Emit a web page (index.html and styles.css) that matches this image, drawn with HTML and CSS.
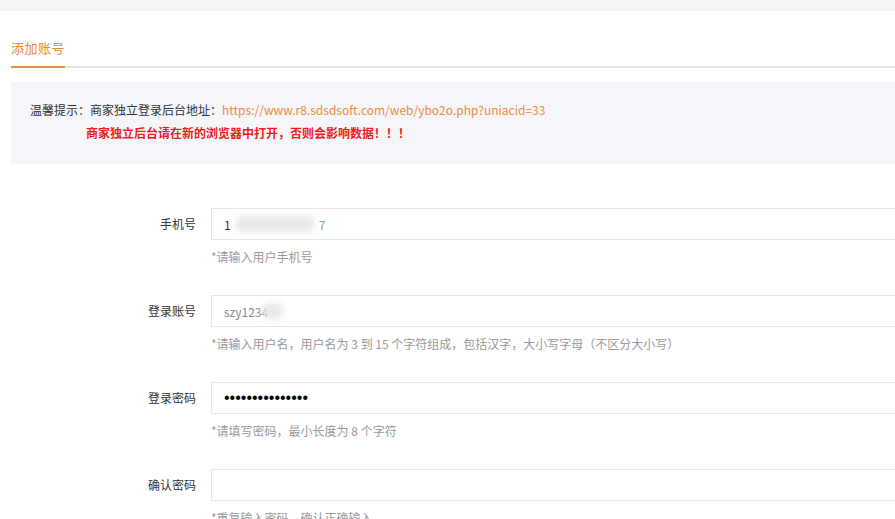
FILE: index.html
```html
<!DOCTYPE html>
<html lang="zh-CN">
<head>
  <meta charset="UTF-8" />
  <meta name="viewport" content="width=device-width, initial-scale=1.0"/>
  <title>添加账号</title>
  <link rel="stylesheet" href="styles.css">
</head>
<body>

<div class="topbar"></div>

<div class="main">
  <div class="tabs">
    <span class="tab active">添加账号</span>
  </div>

  <div class="alert">
    <div class="alert-line">温馨提示：商家独立登录后台地址：<span class="link">https://www.r8.sdsdsoft.com/web/ybo2o.php?uniacid=33</span></div>
    <div class="alert-warn">商家独立后台请在新的浏览器中打开，否则会影响数据！！！</div>
  </div>

  <form class="form">
    <div class="form-group">
      <label class="label">手机号</label>
      <div class="field">
        <div class="input"><span class="val">1</span><span class="blur wide"></span><span class="val tail">7</span></div>
        <div class="help">*请输入用户手机号</div>
      </div>
    </div>

    <div class="form-group">
      <label class="label">登录账号</label>
      <div class="field">
        <div class="input"><span class="val faded">szy1234</span><span class="blur short"></span></div>
        <div class="help">*请输入用户名，用户名为 3 到 15 个字符组成，包括汉字，大小写字母（不区分大小写）</div>
      </div>
    </div>

    <div class="form-group">
      <label class="label">登录密码</label>
      <div class="field">
        <div class="input"><span class="dots">•••••••••••••••</span></div>
        <div class="help">*请填写密码，最小长度为 8 个字符</div>
      </div>
    </div>

    <div class="form-group">
      <label class="label">确认密码</label>
      <div class="field">
        <div class="input"></div>
        <div class="help">*重复输入密码，确认正确输入</div>
      </div>
    </div>
  </form>
</div>

</body>
</html>
```

FILE: styles.css
```css
body {
  margin: 0;
  background: #fff;
  font-family: "Noto Sans CJK SC", "Liberation Sans", sans-serif;
  font-size: 12px;
  color: #333;
  overflow: hidden;
}
.topbar {
  height: 11px;
  background: #f5f5f5;
}
.main {
  padding-left: 11px;
  width: 1100px;
}
.tabs {
  height: 55px;
  border-bottom: 2px solid #e5e5e5;
  display: flex;
  align-items: flex-end;
}
.tab {
  font-size: 13px;
  letter-spacing: 0.5px;
  line-height: 18px;
  padding-bottom: 9px;
  margin-bottom: -2px;
  border-bottom: 2px solid transparent;
}
.tab.active {
  color: #e8892f;
  border-bottom-color: #e3913a;
}
.alert {
  margin-top: 14px;
  height: 82px;
  box-sizing: border-box;
  background: #f5f6fa;
  padding: 16px 19px;
  line-height: 23px;
}
.link {
  color: #ef8a3c;
}
.alert-warn {
  padding-left: 56px;
  color: #ee1c1c;
  font-weight: bold;
}
.form {
  margin-top: 44px;
}
.form-group {
  display: flex;
  margin-bottom: 29px;
}
.label {
  width: 185px;
  padding-right: 15px;
  text-align: right;
  line-height: 32px;
}
.field {
  flex: 1;
}
.input {
  height: 32px;
  box-sizing: border-box;
  border: 1px solid #e5e5e5;
  padding: 0 12px;
  display: flex;
  align-items: center;
  color: #333;
}
.val.tail {
  color: #7aa6c8;
}
.val.faded {
  color: #888;
}
.blur {
  display: inline-block;
  height: 16px;
  background: #e9e9e9;
  border-radius: 8px;
  filter: blur(3px);
}
.blur.wide {
  width: 80px;
  margin: 0 4px;
}
.blur.short {
  width: 22px;
  margin-left: -6px;
}
.dots {
  font-family: "Liberation Sans", sans-serif;
  font-size: 16px;
  line-height: 16px;
  color: #000;
}
.help {
  margin-top: 8px;
  line-height: 18px;
  color: #999;
}
```
